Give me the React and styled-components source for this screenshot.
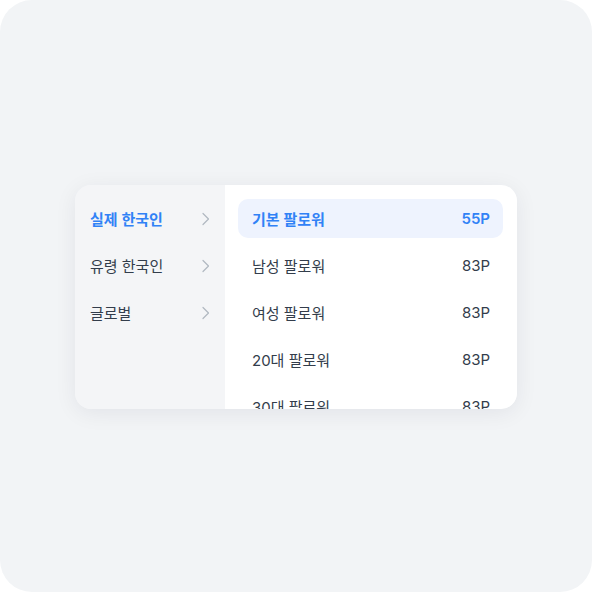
import React from 'react';
import styled, { createGlobalStyle } from 'styled-components';

const GlobalStyle = createGlobalStyle`
    html, body {
        margin: 0;
        padding: 0;
        background: #ffffff;
    }
    * {
        box-sizing: border-box;
    }
`;

const Frame = styled.div`
    width: 592px;
    height: 592px;
    border-radius: 32px;
    background-color: #f2f4f6;
    display: flex;
    align-items: center;
    justify-content: center;
    font-family: "Inter", "Noto Sans CJK KR", "Noto Sans", sans-serif;
`;

const Card = styled.div`
    width: 442px;
    height: 224px;
    margin-top: 2px;
    display: flex;
    border-radius: 16px;
    overflow: hidden;
    box-shadow: 0 4px 22px rgba(0, 20, 60, 0.07);
`;

const CategoryList = styled.ul`
    list-style: none;
    margin: 0;
    width: 150px;
    padding: 14px 0 0;
    background-color: #f4f5f7;
    display: flex;
    flex-direction: column;
    gap: 8px;
`;

const Category = styled.li`
    height: 39px;
    display: flex;
    align-items: center;
    justify-content: space-between;
    padding: 0 12px 0 15px;
    font-size: 15px;
    font-weight: ${props => props.active ? 600 : 400};
    color: ${props => props.active ? '#3182f6' : '#333d4b'};
`;

const Chevron = styled.svg`
    width: 16px;
    height: 16px;
    color: #b0b8c1;
`;

const OptionList = styled.ul`
    list-style: none;
    margin: 0;
    flex: 1;
    padding: 14px 14px 0 13px;
    background-color: #ffffff;
    display: flex;
    flex-direction: column;
    gap: 8px;
    overflow: hidden;
`;

const Option = styled.li`
    flex-shrink: 0;
    height: 39px;
    display: flex;
    align-items: center;
    justify-content: space-between;
    padding: 0 13px 0 14px;
    border-radius: 10px;
    background-color: ${props => props.active ? '#eef3fe' : 'transparent'};
    font-size: 15px;
    color: ${props => props.active ? '#3182f6' : '#333d4b'};
    font-weight: ${props => props.active ? 600 : 400};
`;

const Price = styled.span`
    font-size: 15px;
`;

const categories = ['실제 한국인', '유령 한국인', '글로벌'];

const options = [
    { name: '기본 팔로워', price: '55P' },
    { name: '남성 팔로워', price: '83P' },
    { name: '여성 팔로워', price: '83P' },
    { name: '20대 팔로워', price: '83P' },
    { name: '30대 팔로워', price: '83P' },
    { name: '40대 팔로워', price: '83P' },
];

const ChevronIcon = () => (
    <Chevron viewBox="0 0 16 16" fill="none">
        <path d="M6 2.5L11.5 8L6 13.5" stroke="currentColor" strokeWidth="1.2" strokeLinecap="round" strokeLinejoin="round" />
    </Chevron>
);

const App = () => {
    return (
        <>
            <GlobalStyle />
            <Frame>
                <Card>
                    <CategoryList>
                        {categories.map((category, index) => (
                            <Category key={category} active={index === 0}>
                                <span>{category}</span>
                                <ChevronIcon />
                            </Category>
                        ))}
                    </CategoryList>
                    <OptionList>
                        {options.map((option, index) => (
                            <Option key={option.name} active={index === 0}>
                                <span>{option.name}</span>
                                <Price>{option.price}</Price>
                            </Option>
                        ))}
                    </OptionList>
                </Card>
            </Frame>
        </>
    );
};

export default App;
